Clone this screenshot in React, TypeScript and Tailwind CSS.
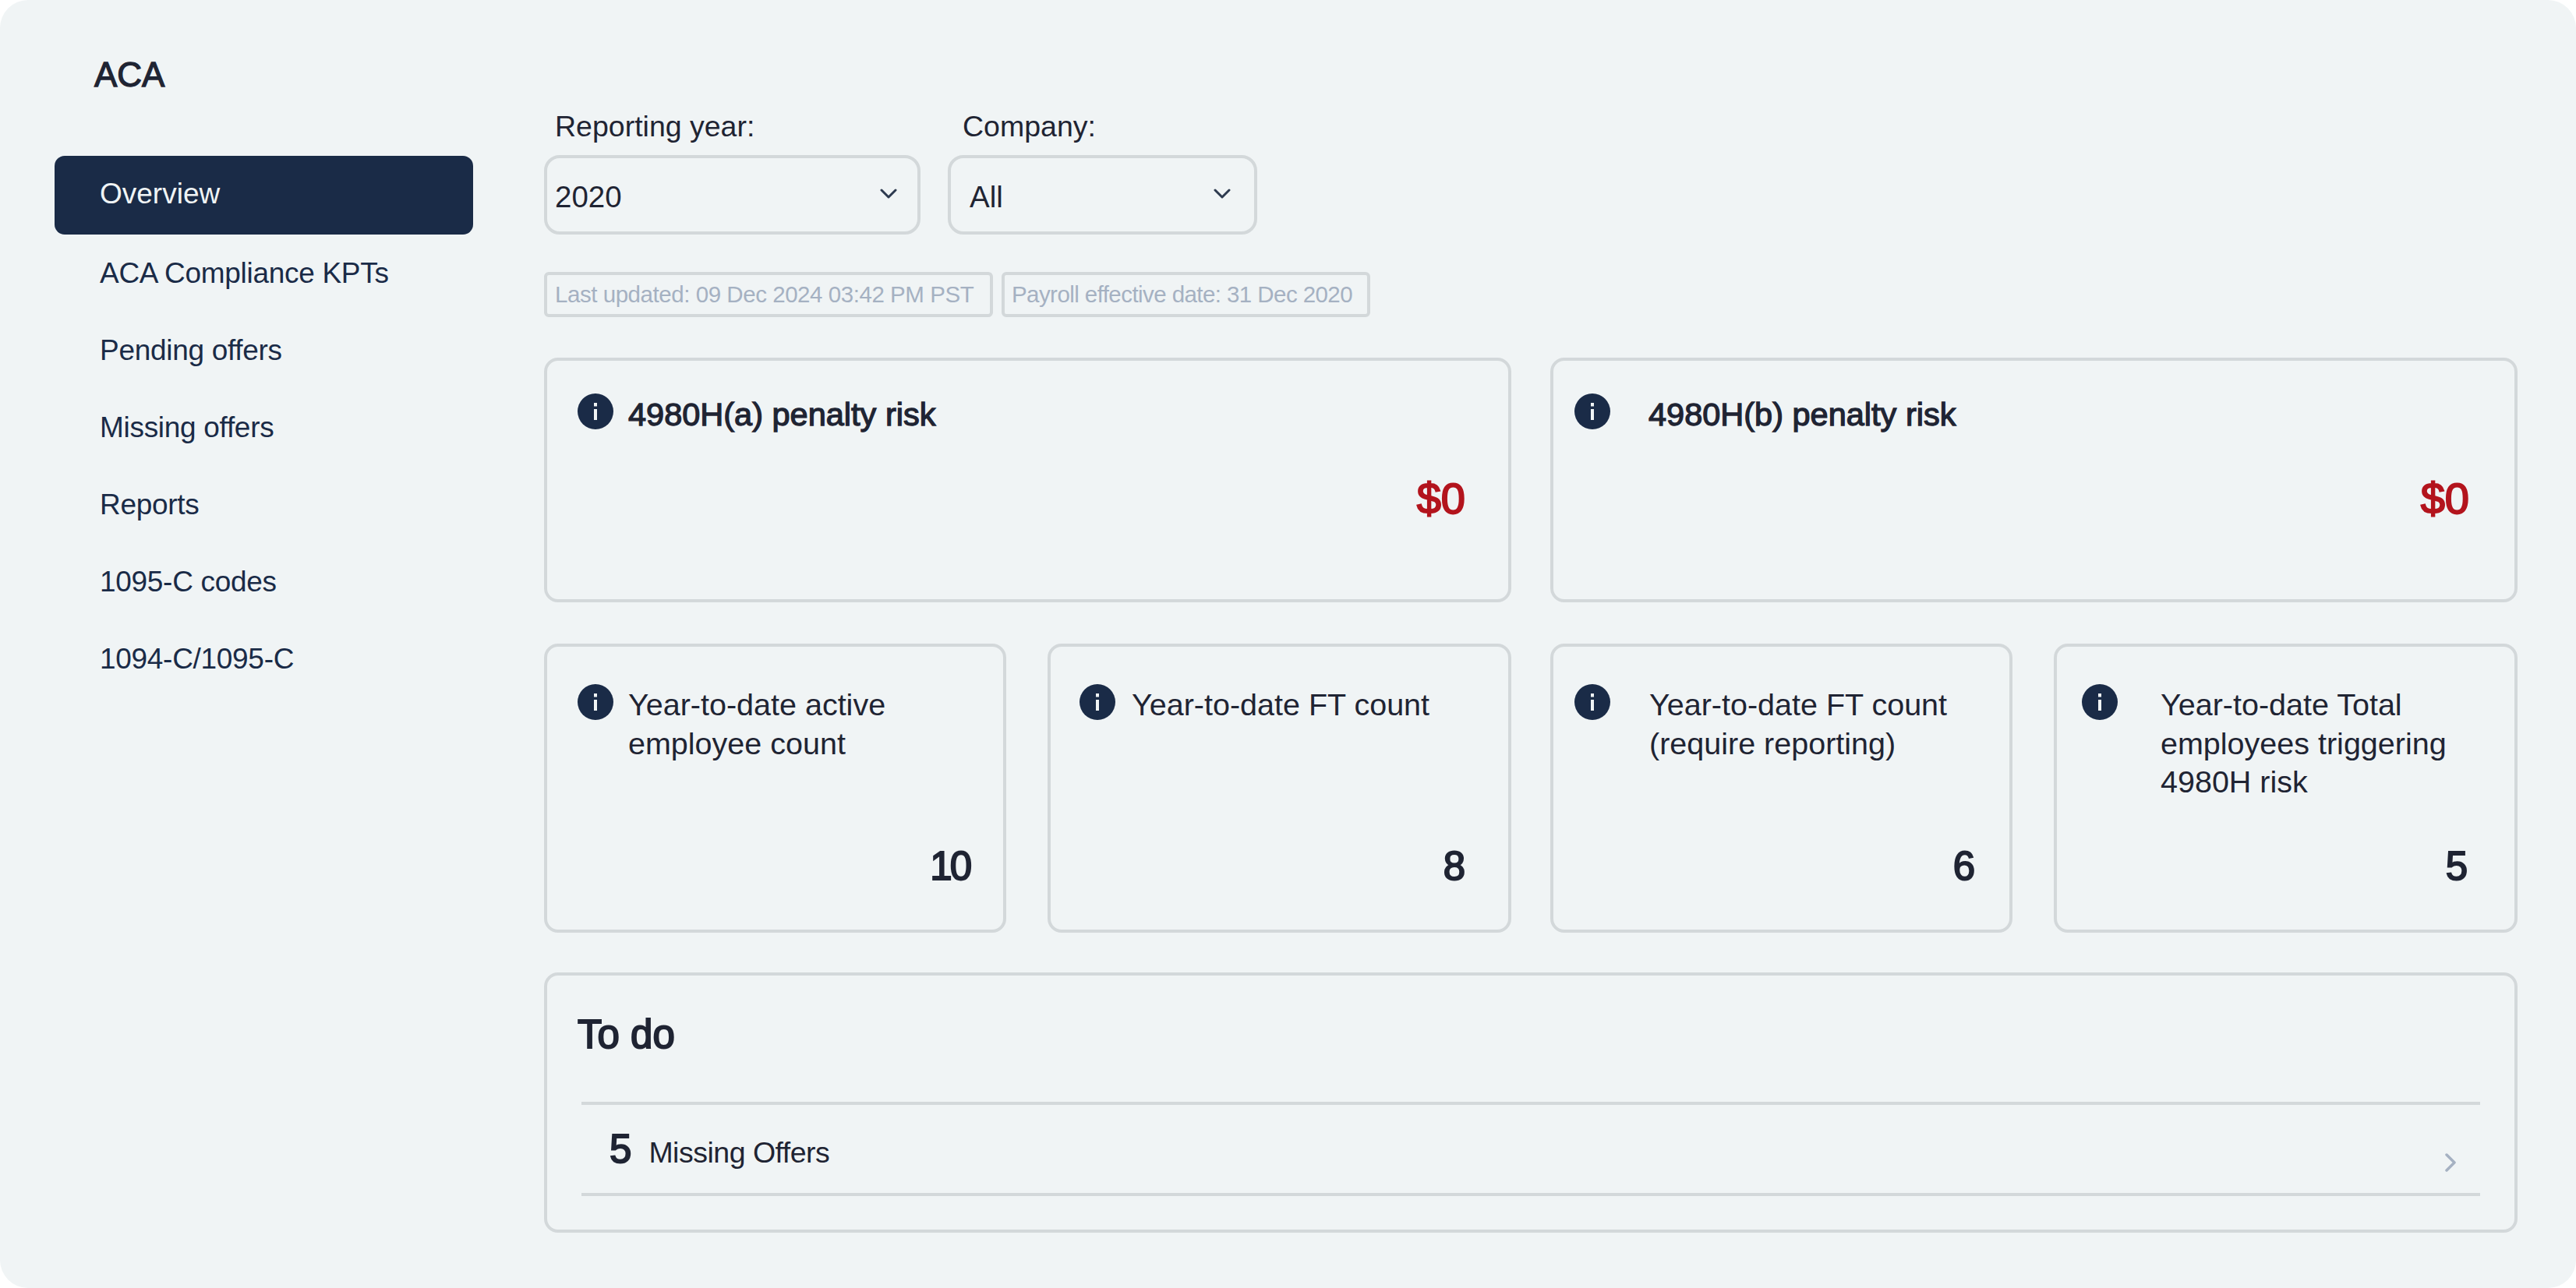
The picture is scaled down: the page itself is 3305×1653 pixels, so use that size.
import React from "react";
import { clsx } from "clsx";

const medium = "[-webkit-text-stroke:1.3px_currentColor]";
const heavy = "[-webkit-text-stroke:2px_currentColor]";

const navItems = ["ACA Compliance KPTs", "Pending offers", "Missing offers", "Reports", "1095-C codes", "1094-C/1095-C"];

const InfoIcon = () => (
  <svg viewBox="0 0 46 46" className="w-[46px] h-[46px] shrink-0">
    <circle cx="23" cy="23" r="23" fill="#1a2b47" />
    <rect x="21" y="20" width="4" height="14" fill="#f0f4f5" />
    <rect x="21" y="12" width="4" height="4.5" fill="#f0f4f5" />
  </svg>
);

const Chevron = () => (
  <svg viewBox="0 0 22 13" className="w-[22px] h-[13px]" fill="none" stroke="#2d3a4f" strokeWidth="3" strokeLinecap="round" strokeLinejoin="round">
    <path d="M2 2l9 9 9-9" />
  </svg>
);

const Select = ({ value, textPad, iconPad }: { value: string; textPad: string; iconPad: string }) => (
  <div className="w-full h-[102px] border-4 border-[#d3d8da] rounded-[20px] flex justify-between">
    <span className={clsx("text-[38.5px] leading-[50px] text-[#1f2433] mt-[25px]", textPad)}>{value}</span>
    <span className={clsx("mt-[39px]", iconPad)}><Chevron /></span>
  </div>
);

const Badge = ({ children, className }: { children: string; className: string }) => (
  <div className={clsx("h-[58px] border-4 border-[#d3d8da] rounded-[6px] flex items-center text-[29.5px] text-[#a5b1c2] whitespace-nowrap", className)}>
    {children}
  </div>
);

type KpiProps = {
  lines: string[];
  value: string;
  className: string;
  iconPad: string;
  gap: string;
  valuePad: string;
};

const KpiCard = ({ lines, value, className, iconPad, gap, valuePad }: KpiProps) => (
  <div className={clsx("h-[371px] border-4 border-[#d3d8da] rounded-[18px] flex flex-col justify-between pt-[48px] pb-[51px]", iconPad, className)}>
    <div className={clsx("flex items-start", gap)}>
      <InfoIcon />
      <div className="text-[39.5px] leading-[49.5px] mt-[2px] text-[#1f2433] whitespace-nowrap">
        {lines.map((l) => (
          <div key={l}>{l}</div>
        ))}
      </div>
    </div>
    <div className={clsx("text-right text-[51px] leading-[60px] tracking-[-3px] text-[#1f2433]", heavy, valuePad)}>{value}</div>
  </div>
);

const PenaltyCard = ({ title, iconPad, gap, valuePad }: { title: string; iconPad: string; gap: string; valuePad: string }) => (
  <div className={clsx("w-[1241px] h-[314px] border-4 border-[#d3d8da] rounded-[18px] flex flex-col justify-between pt-[42px] pb-[99px]", iconPad)}>
    <div className={clsx("flex items-start", gap)}>
      <InfoIcon />
      <div className={clsx("text-[41.5px] leading-[50px] mt-[2px] text-[#1f2433]", medium)}>{title}</div>
    </div>
    <div className={clsx("text-right text-[56px] leading-[60px] text-[#b3141d]", heavy, valuePad)}>$0</div>
  </div>
);

export default function App() {
  return (
    <div className="w-[3305px] h-[1653px] bg-white font-['Liberation_Sans',sans-serif]">
      <div className="w-full h-full bg-[#f0f4f5] rounded-[36px] flex">
        <aside className="w-[698px] shrink-0 pl-[70px]">
          <div className={clsx("pl-[51px] pt-[70px] h-[200px] text-[44px] leading-[52px] text-[#1f2433]", medium)}>ACA</div>
          <div className="w-[537px] h-[101px] rounded-[13px] bg-[#1a2b47] pl-[58px] flex items-center text-[37px] text-[#f0f4f5] pb-[4px]">
            Overview
          </div>
          {navItems.map((item) => (
            <div key={item} className="w-[537px] h-[99px] pl-[58px] flex items-center text-[37px] text-[#1a2b47] tracking-[-0.3px]">
              {item}
            </div>
          ))}
        </aside>

        <main className="w-[2532px] pt-[142px]">
          <div className="flex gap-[35px]">
            <div className="w-[483px]">
              <div className="pl-[14px] h-[57px] text-[37.5px] leading-[40px] text-[#1f2433]">Reporting year:</div>
              <Select value="2020" textPad="pl-[10px]" iconPad="pr-[26px]" />
            </div>
            <div className="w-[397px]">
              <div className="pl-[19px] h-[57px] text-[37.5px] leading-[40px] text-[#1f2433]">Company:</div>
              <Select value="All" textPad="pl-[24px]" iconPad="pr-[30px]" />
            </div>
          </div>

          <div className="flex gap-[11px] mt-[48px]">
            <Badge className="w-[576px] pl-[10px] tracking-[-0.45px]">Last updated: 09 Dec 2024 03:42 PM PST</Badge>
            <Badge className="w-[473px] pl-[9px] tracking-[-0.57px]">Payroll effective date: 31 Dec 2020</Badge>
          </div>

          <div className="flex gap-[50px] mt-[52px]">
            <PenaltyCard title="4980H(a) penalty risk" iconPad="pl-[39px]" gap="gap-[19px]" valuePad="pr-[55px]" />
            <PenaltyCard title="4980H(b) penalty risk" iconPad="pl-[27px]" gap="gap-[49px]" valuePad="pr-[58px]" />
          </div>

          <div className="flex gap-[50px] mt-[53px]">
            <div className="w-[1241px] flex justify-between">
              <KpiCard className="w-[593px]" lines={["Year-to-date active", "employee count"]} value="10" iconPad="pl-[39px]" gap="gap-[19px]" valuePad="pr-[43px]" />
              <KpiCard className="w-[595px]" lines={["Year-to-date FT count"]} value="8" iconPad="pl-[37px]" gap="gap-[21px]" valuePad="pr-[58px]" />
            </div>
            <div className="w-[1241px] flex justify-between">
              <KpiCard className="w-[593px]" lines={["Year-to-date FT count", "(require reporting)"]} value="6" iconPad="pl-[27px]" gap="gap-[50px]" valuePad="pr-[47px]" />
              <KpiCard className="w-[595px]" lines={["Year-to-date Total", "employees triggering", "4980H risk"]} value="5" iconPad="pl-[32px]" gap="gap-[55px]" valuePad="pr-[63px]" />
            </div>
          </div>

          <div className="mt-[51px] h-[334px] border-4 border-[#d3d8da] rounded-[18px] pt-[48px] pl-[39px] pr-[44px]">
            <div className={clsx("text-[51px] leading-[56px] text-[#1f2433]", heavy)}>To do</div>
            <div className="ml-[5px] mt-[58px] h-[121px] border-y-4 border-[#d3d8da] flex">
              <div className="flex items-baseline gap-[22px] pl-[36px] pt-[27px]">
                <span className={clsx("text-[51px] leading-[60px] text-[#1f2433]", heavy)}>5</span>
                <span className="text-[37.5px] leading-[50px] text-[#1f2433] tracking-[-0.5px]">Missing Offers</span>
              </div>
              <svg viewBox="0 0 14 24" className="w-[14px] h-[24px] ml-auto mr-[31px] mt-[62px]" fill="none" stroke="#a5b1c2" strokeWidth="3.5" strokeLinecap="round" strokeLinejoin="round">
                <path d="M2 2l10 10-10 10" />
              </svg>
            </div>
          </div>
        </main>
      </div>
    </div>
  );
}
